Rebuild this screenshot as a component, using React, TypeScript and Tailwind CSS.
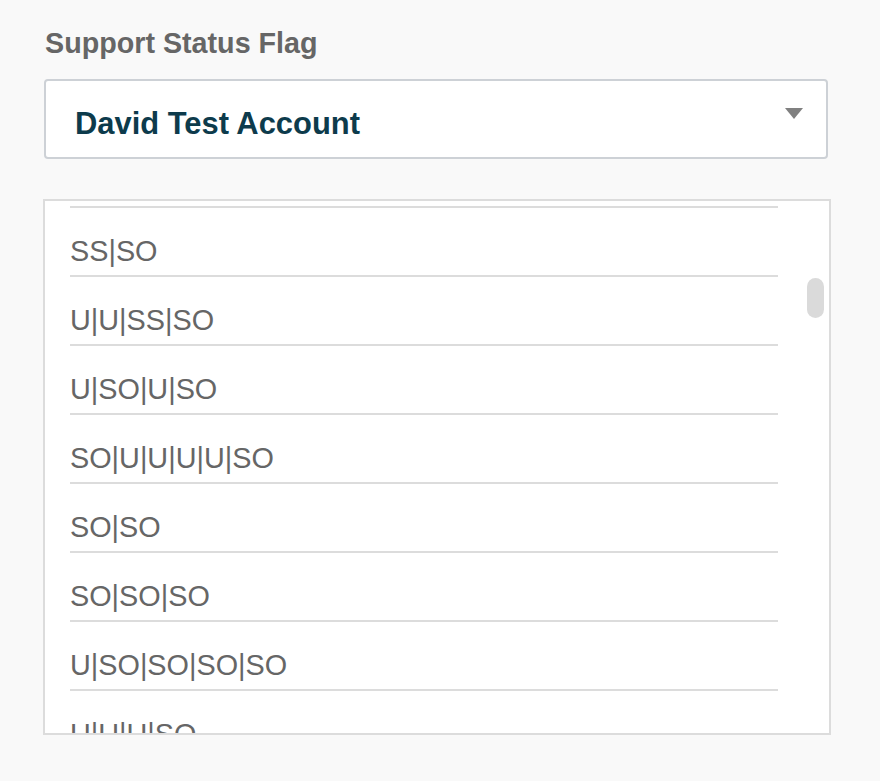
const flags = [
  "SO|U|SO",
  "SS|SO",
  "U|U|SS|SO",
  "U|SO|U|SO",
  "SO|U|U|U|U|SO",
  "SO|SO",
  "SO|SO|SO",
  "U|SO|SO|SO|SO",
  "U|U|U|SO",
  "SO|SS",
];

export default function App() {
  return (
    <div
      className="min-h-[781px] w-full bg-[#f9f9f9] pl-[43px] pt-[27px]"
      style={{ fontFamily: '"Liberation Sans", Arial, sans-serif' }}
    >
      <h2 className="ml-[2px] text-[28.7px] font-bold leading-[33px] text-[#666666]">Support Status Flag</h2>

      {/* dropdown */}
      <div className="relative ml-[1px] mt-[19px] h-[80px] w-[784px] rounded-[4px] border-2 border-[#cdd1d6] bg-white pl-[29px] pt-[25px]">
        <span className="text-[30.9px] font-bold leading-[35px] text-[#0d3b4c]">David Test Account</span>
        <svg className="absolute right-[23px] top-[27px]" width="18" height="11" viewBox="0 0 18 11">
          <path d="M0 0 H18 L9 11 Z" fill="#808080" />
        </svg>
      </div>

      {/* list */}
      <div className="relative mt-[40px] h-[536px] w-[788px] overflow-hidden border-2 border-[#dcdcdc] bg-white">
        <ul className="-mt-[62px] ml-[25px] mr-[51px]">
          {flags.map((f, i) => (
            <li
              key={i}
              className="border-b-2 border-[#dcdcdc] pb-[7px] pt-[27px] text-[28.8px] leading-[33px] text-[#666666]"
            >
              {f}
            </li>
          ))}
        </ul>
        <div className="absolute left-[762px] top-[77px] h-[40px] w-[17px] rounded-full bg-[#dadada]" />
      </div>
    </div>
  );
}
